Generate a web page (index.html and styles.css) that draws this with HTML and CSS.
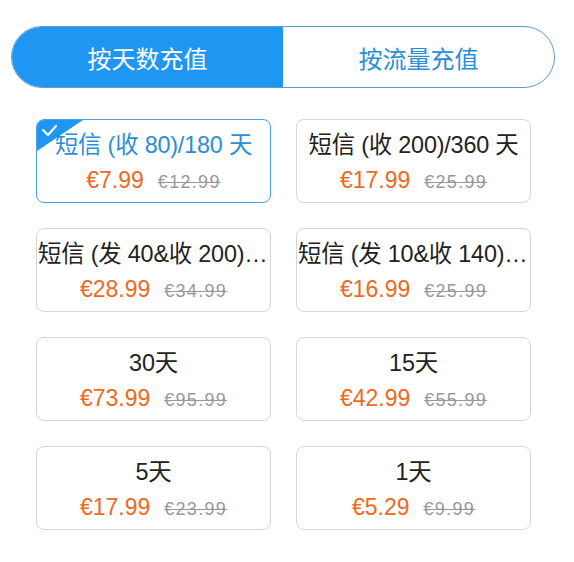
FILE: index.html
```html
<!DOCTYPE html>
<html lang="zh-CN">
<head>
<meta charset="utf-8">
<link rel="stylesheet" href="styles.css">
</head>
<body>
<div class="page">
  <div class="toggle">
    <div class="tab active">按天数充值</div>
    <div class="tab">按流量充值</div>
  </div>
  <div class="grid">
    <div class="card selected">
      <svg class="badge" width="48" height="34" viewBox="0 0 48 34"><polygon points="0,0 46,0 0,31" fill="#1e96f2"/><polyline points="6,10 11,15 19,6" fill="none" stroke="#fff" stroke-width="2.2" stroke-linecap="round" stroke-linejoin="round"/></svg>
      <div class="title">短信 (收 80)/180 天</div>
      <div class="price"><span class="now">€7.99</span><span class="old">€12.99</span></div>
    </div>
    <div class="card">
      <div class="title">短信 (收 200)/360 天</div>
      <div class="price"><span class="now">€17.99</span><span class="old">€25.99</span></div>
    </div>
    <div class="card">
      <div class="title">短信 (发 40&amp;收 200)/360 天</div>
      <div class="price"><span class="now">€28.99</span><span class="old">€34.99</span></div>
    </div>
    <div class="card">
      <div class="title">短信 (发 10&amp;收 140)/180 天</div>
      <div class="price"><span class="now">€16.99</span><span class="old">€25.99</span></div>
    </div>
    <div class="card">
      <div class="title">30天</div>
      <div class="price"><span class="now">€73.99</span><span class="old">€95.99</span></div>
    </div>
    <div class="card">
      <div class="title">15天</div>
      <div class="price"><span class="now">€42.99</span><span class="old">€55.99</span></div>
    </div>
    <div class="card">
      <div class="title">5天</div>
      <div class="price"><span class="now">€17.99</span><span class="old">€23.99</span></div>
    </div>
    <div class="card">
      <div class="title">1天</div>
      <div class="price"><span class="now">€5.29</span><span class="old">€9.99</span></div>
    </div>
  </div>
</div>
</body>
</html>
```
FILE: styles.css
```css
html, body {
  margin: 0;
  padding: 0;
  background: #fff;
}
body {
  font-family: "Liberation Sans", "Noto Sans CJK SC", sans-serif;
  color: #222;
}
.page {
  padding: 26px 19px 0 11px;
}
.toggle {
  display: flex;
  height: 62px;
  border: 1px solid #5a9fd4;
  border-radius: 31px;
  overflow: hidden;
  box-sizing: border-box;
}
.tab {
  flex: 1;
  display: flex;
  align-items: center;
  justify-content: center;
  font-size: 24px;
  color: #2a8ed8;
  font-family: "Noto Sans CJK SC", sans-serif;
}
.tab.active {
  background: #1e96f2;
  color: #fff;
}
.grid {
  display: grid;
  grid-template-columns: 235px 235px;
  column-gap: 25px;
  row-gap: 25px;
  margin: 31px 0 0 25px;
}
.card {
  position: relative;
  height: 84px;
  box-sizing: border-box;
  border: 1px solid #d6d6d6;
  border-radius: 8px;
  overflow: hidden;
  text-align: center;
}
.card.selected {
  border-color: #4aa3e4;
}
.badge {
  position: absolute;
  left: 0;
  top: 0;
}
.title {
  position: relative;
  font-size: 23.4px;
  line-height: 30px;
  padding: 10px 1px 0;
  white-space: nowrap;
  overflow: hidden;
  text-overflow: ellipsis;
  letter-spacing: -0.2px;
  color: #222;
}
.selected .title {
  color: #2a8ed8;
}
.price {
  margin-top: 5px;
  line-height: 30px;
  white-space: nowrap;
}
.now {
  font-size: 23px;
  color: #ee6a1c;
}
.old {
  font-size: 18px;
  letter-spacing: 1.3px;
  color: #999;
  text-decoration: line-through;
  margin-left: 14px;
}
```
